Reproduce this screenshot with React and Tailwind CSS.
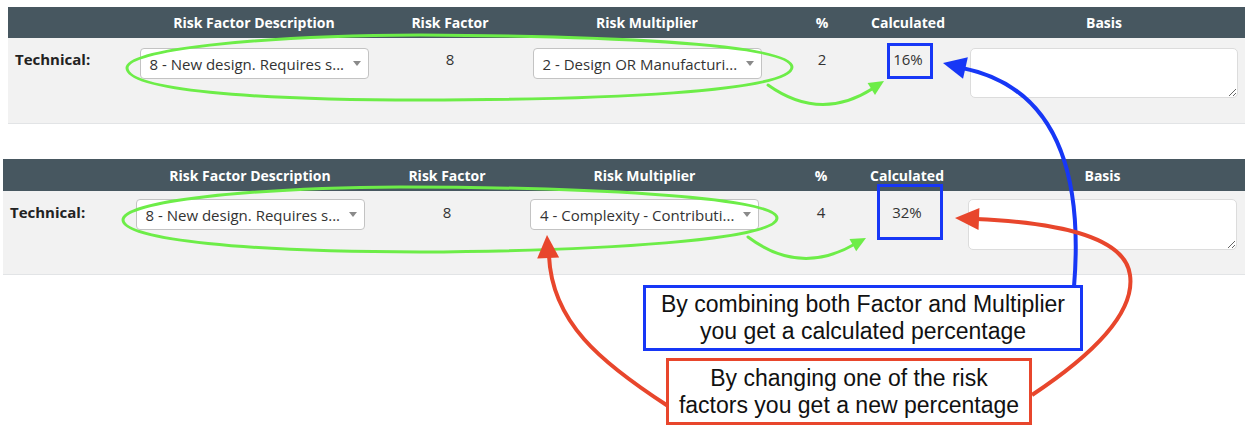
const tables = [
  {
    wrap: 'ml-[8px] w-[1237px]',
    cols: 'grid grid-cols-[125px_242px_150px_244px_106px_66px_304px]',
    head: 'h-[31px]',
    body: 'h-[86px]',
    selTop: 'pt-[10px]',
    txtTop: 'pt-[10px]',
    basis: 'pl-[29px] pr-[7px]',
    area: 'h-[50px]',
    mult: '2 - Design OR Manufacturi...',
    pct: '2',
    calc: '16%',
  },
  {
    wrap: 'ml-[3px] w-[1242px] mt-[35px]',
    cols: 'grid grid-cols-[127px_240px_154px_241px_112px_60px_308px]',
    head: 'h-[32px]',
    body: 'h-[84px]',
    selTop: 'pt-[8px]',
    txtTop: 'pt-[10px]',
    basis: 'pl-[31px] pr-[8px]',
    area: 'h-[51px]',
    mult: '4 - Complexity - Contributi...',
    pct: '4',
    calc: '32%',
  },
];

const Select = ({ text }) => (
  <div className="w-[229px] h-[31px] bg-white border border-[#c3c3c3] rounded-[4px] flex items-center justify-between pl-[9px] pr-[7px] text-[15px] text-[#333] whitespace-nowrap">
    <span>{text}</span>
    <span className="w-0 h-0 border-l-[4px] border-r-[4px] border-t-[5px] border-l-transparent border-r-transparent border-t-[#8a8a8a]" />
  </div>
);

const RiskTable = ({ t }) => (
  <div className={t.wrap}>
    <div className={`${t.cols} ${t.head} bg-[#475760] text-white text-[14px] font-bold`}>
      <div />
      <div className="flex items-center justify-center whitespace-nowrap">Risk Factor Description</div>
      <div className="flex items-center justify-center whitespace-nowrap">Risk Factor</div>
      <div className="flex items-center justify-center whitespace-nowrap">Risk Multiplier</div>
      <div className="flex items-center justify-center">%</div>
      <div className="flex items-center justify-center whitespace-nowrap">Calculated</div>
      <div className={`flex items-center justify-center ${t.basis}`}>Basis</div>
    </div>
    <div className={`${t.cols} ${t.body} bg-[#f2f2f2] border-b border-[#e2e4e6] text-[15px] text-[#333] leading-[22px]`}>
      <div className={`${t.txtTop} pl-[7px] font-bold text-[#222]`}>Technical:</div>
      <div className={`${t.selTop} flex justify-center`}>
        <Select text="8 - New design. Requires s..." />
      </div>
      <div className={`${t.txtTop} flex justify-center`}>8</div>
      <div className={`${t.selTop} flex justify-center`}>
        <Select text={t.mult} />
      </div>
      <div className={`${t.txtTop} flex justify-center`}>{t.pct}</div>
      <div className={`${t.txtTop} flex justify-center`}>{t.calc}</div>
      <div className={`${t.selTop} ${t.basis}`}>
        <textarea className={`block w-full ${t.area} bg-white border border-[#dcdcdc] rounded-[5px] outline-none`} />
      </div>
    </div>
  </div>
);

// arrow head as a triangle: tip point, direction, length, half width
const head = (tx, ty, dx, dy, len, half) => {
  const n = Math.hypot(dx, dy);
  const ux = dx / n;
  const uy = dy / n;
  const bx = tx - ux * len;
  const by = ty - uy * len;
  return `${tx},${ty} ${bx - uy * half},${by + ux * half} ${bx + uy * half},${by - ux * half}`;
};

const Annotations = () => (
  <svg className="absolute inset-0 pointer-events-none" width="1248" height="436" viewBox="0 0 1248 436" fill="none">
    {/* green ellipses and arrows */}
    <g stroke="#6ded48" strokeWidth="3" strokeLinecap="round">
      <path d="M 792,67 C 790,42 580,36 420,35 C 250,36 127,50 127,68 C 128,90 250,100 420,100 C 600,100 792,92 792,67 Z" />
      <path d="M 777,218 C 776,196 570,187 400,187 C 250,188 123,201 123,220 C 124,240 250,252 420,252 C 600,251 777,240 777,218 Z" />
      <path d="M 768,85 Q 820,122 872,89" />
      <path d="M 748,237 Q 800,276 855,244" />
    </g>
    <polygon fill="#6ded48" points={head(884, 81, 0.85, -0.53, 15, 7)} />
    <polygon fill="#6ded48" points={head(866, 238, 0.88, -0.48, 15, 7)} />

    {/* blue outlines */}
    <g stroke="#1737f6" strokeWidth="3">
      <rect x="888.5" y="44.5" width="43" height="33" />
      <rect x="878.5" y="185.5" width="63" height="53" />
      <path d="M 1074,287 C 1084,165 1052,86 962,68" strokeWidth="4" />
    </g>
    <polygon fill="#1737f6" points={head(943, 63, -0.98, -0.22, 23, 11)} />

    {/* red arrows */}
    <g stroke="#e8462c" strokeWidth="4">
      <path d="M 668,406 C 600,362 552,322 549,256" />
      <path d="M 1032,395 C 1100,350 1135,310 1130,275 C 1125,235 1050,222 976,219" />
    </g>
    <polygon fill="#e8462c" points={head(547, 235, -0.05, -1, 23, 11)} />
    <polygon fill="#e8462c" points={head(955, 218, -1, -0.04, 24, 11)} />
  </svg>
);

export default function App() {
  return (
    <div className="relative w-[1248px] h-[436px] bg-white overflow-hidden font-['Open_Sans',sans-serif]">
      <div className="pt-[7px]">
        {tables.map((t, i) => (
          <RiskTable key={i} t={t} />
        ))}
        <div className="font-['Liberation_Sans',Arial,sans-serif] text-[23px] leading-[27px] text-[#111] text-center">
          <div className="ml-[643px] mt-[10px] w-[440px] h-[66px] bg-white border-[3px] border-[#1737f6] flex flex-col justify-center">
            <div>By combining both Factor and Multiplier</div>
            <div>you get a calculated percentage</div>
          </div>
          <div className="ml-[666px] mt-[7px] w-[366px] h-[67px] bg-white border-[3px] border-[#e8462c] flex flex-col justify-center">
            <div>By changing one of the risk</div>
            <div>factors you get a new percentage</div>
          </div>
        </div>
      </div>
      <Annotations />
    </div>
  );
}
